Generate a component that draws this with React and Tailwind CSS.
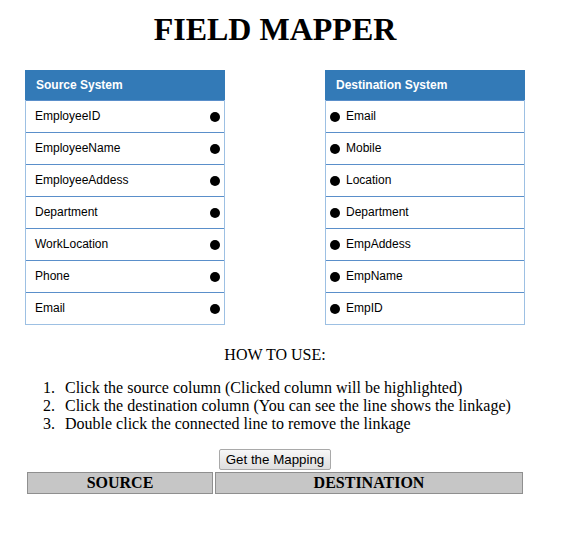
import React from "react";

const source = ["EmployeeID", "EmployeeName", "EmployeeAddess", "Department", "WorkLocation", "Phone", "Email"];
const dest = ["Email", "Mobile", "Location", "Department", "EmpAddess", "EmpName", "EmpID"];
const steps = [
  "Click the source column (Clicked column will be highlighted)",
  "Click the destination column (You can see the line shows the linkage)",
  "Double click the connected line to remove the linkage",
];

function Dot() {
  return <span className="block w-[10px] h-[10px] rounded-full bg-black shrink-0" />;
}

function Box({ title, items, side }) {
  return (
    <div className="w-[200px]">
      <div className="h-[30px] bg-[#337ab7] text-white font-bold text-[12px] leading-[30px] pl-[11px]">
        {title}
      </div>
      <div className="border-l border-r border-b border-[#9dc0e3]">
        {items.map((it) => (
          <div
            key={it}
            className="h-[32px] border-t border-[#5a8fca] flex items-center text-[12px] leading-[14px] text-black"
          >
            {side === "src" ? (
              <>
                <span className="pl-[9px] flex-1 -mt-[1px]">{it}</span>
                <span className="pr-[4px]">
                  <Dot />
                </span>
              </>
            ) : (
              <>
                <span className="pl-[4px]">
                  <Dot />
                </span>
                <span className="pl-[6px] -mt-[1px]">{it}</span>
              </>
            )}
          </div>
        ))}
      </div>
    </div>
  );
}

export default function App() {
  return (
    <div className="w-[550px] bg-white text-black" style={{ fontFamily: '"Liberation Serif", serif' }}>
      <h1 className="text-center text-[32px] leading-[37px] font-bold pt-[11px]">FIELD MAPPER</h1>
      <div
        className="mt-[22px] flex justify-between px-[25px]"
        style={{ fontFamily: '"Liberation Sans", Arial, sans-serif' }}
      >
        <Box title="Source System" items={source} side="src" />
        <Box title="Destination System" items={dest} side="dst" />
      </div>
      <div className="mt-[21px] text-center text-[16px] leading-[18px]">HOW TO USE:</div>
      <ol className="mt-[15px] px-[35px] text-[16px] leading-[18px]">
        {steps.map((s, i) => (
          <li key={i} className="flex">
            <span className="w-[20px] text-right shrink-0">{i + 1}.</span>
            <span className="pl-[10px]">{s}</span>
          </li>
        ))}
      </ol>
      <div className="mt-[16px] flex justify-center">
        <button
          className="h-[21px] px-[6px] border border-[#a9a9a9] rounded-[2px] bg-gradient-to-b from-[#f7f7f7] to-[#dedede] text-[13.333px] leading-[17px] text-black"
          style={{ fontFamily: '"Liberation Sans", Arial, sans-serif' }}
        >
          Get the Mapping
        </button>
      </div>
      <div className="px-[25px]">
        <table className="w-[500px] border-separate border-spacing-[2px]">
          <thead>
            <tr>
              <th className="w-[186px] h-[22px] p-0 bg-[#c6c6c6] border border-[#8f8f8f] text-[16px] leading-[18px] font-bold">
                SOURCE
              </th>
              <th className="h-[22px] p-0 bg-[#c6c6c6] border border-[#8f8f8f] text-[16px] leading-[18px] font-bold">
                DESTINATION
              </th>
            </tr>
          </thead>
        </table>
      </div>
    </div>
  );
}
